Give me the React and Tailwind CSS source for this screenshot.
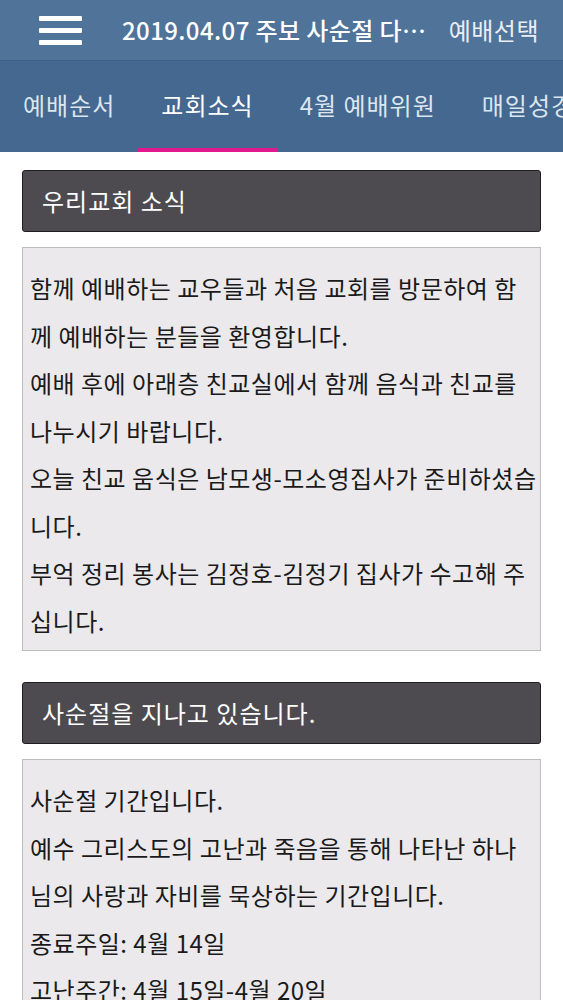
import { useState } from 'react';

const tabs = ['예배순서', '교회소식', '4월 예배위원', '매일성경', '교회일정'];

const news = [
  {
    title: '우리교회 소식',
    lines: [
      '함께 예배하는 교우들과 처음 교회를 방문하여 함',
      '께 예배하는 분들을 환영합니다.',
      '예배 후에 아래층 친교실에서 함께 음식과 친교를',
      '나누시기 바랍니다.',
      '오늘 친교 움식은 남모생-모소영집사가 준비하셨습',
      '니다.',
      '부억 정리 봉사는 김정호-김정기 집사가 수고해 주',
      '십니다.',
    ],
  },
  {
    title: '사순절을 지나고 있습니다.',
    lines: [
      '사순절 기간입니다.',
      '예수 그리스도의 고난과 죽음을 통해 나타난 하나',
      '님의 사랑과 자비를 묵상하는 기간입니다.',
      '종료주일: 4월 14일',
      '고난주간: 4월 15일-4월 20일',
      '부활주일: 4월 21일',
    ],
  },
];

const font = { fontFamily: '"Noto Sans CJK KR", "Noto Sans", sans-serif' };

export default function App() {
  const [active, setActive] = useState(1);

  return (
    <div className="w-[563px] h-[1000px] overflow-hidden bg-white" style={font}>
      {/* top bar */}
      <div className="h-[60px] bg-[#50739a] flex items-center text-white">
        <button className="ml-[39px] w-[43px] shrink-0 flex flex-col gap-[7px]">
          <span className="block h-[5px] bg-white rounded-[1px]" />
          <span className="block h-[5px] bg-white rounded-[1px]" />
          <span className="block h-[5px] bg-white rounded-[1px]" />
        </button>
        <div className="ml-[40px] w-[310px] shrink-0 truncate text-[24px] font-medium tracking-[0.4px] leading-[30px]">
          2019.04.07 주보 사순절 다섯째 주일
        </div>
        <div className="ml-auto mr-[24px] shrink-0 text-[24px] tracking-[0.5px] leading-none text-[#e9eef4]">예배선택</div>
      </div>

      {/* tabs */}
      <div className="h-[92px] bg-[#446890] border-t border-[#3d5f85] flex overflow-hidden">
        {tabs.map((t, i) => (
          <button
            key={t}
            onClick={() => setActive(i)}
            className={
              'shrink-0 px-[23px] h-full flex items-center text-[24px] tracking-[1px] whitespace-nowrap border-b-4 ' +
              (i === active ? 'border-[#e2188f] text-white' : 'border-transparent text-[#dde5ee]')
            }
          >
            {t}
          </button>
        ))}
      </div>

      {/* content */}
      <div className="px-[22px] pt-[18px] flex flex-col">
        {news.map((n, idx) => (
          <div key={n.title} className={idx > 0 ? 'mt-[31px]' : ''}>
            <div className="h-[62px] bg-[#4d4b4f] border border-[#1f1f1f] rounded-[3px] flex items-center pl-[19px] text-white text-[24px] tracking-[1px]">
              {n.title}
            </div>
            <div className="mt-[15px] bg-[#ebe9ec] border border-[#bdbdbd] px-[7px] pt-[16px] pb-[6px] text-[24px] tracking-[0.5px] leading-[47.5px] text-[#1a1a1a]">
              {n.lines.map((l, j) => (
                <div key={j} className="whitespace-nowrap">{l}</div>
              ))}
            </div>
          </div>
        ))}
      </div>
    </div>
  );
}
